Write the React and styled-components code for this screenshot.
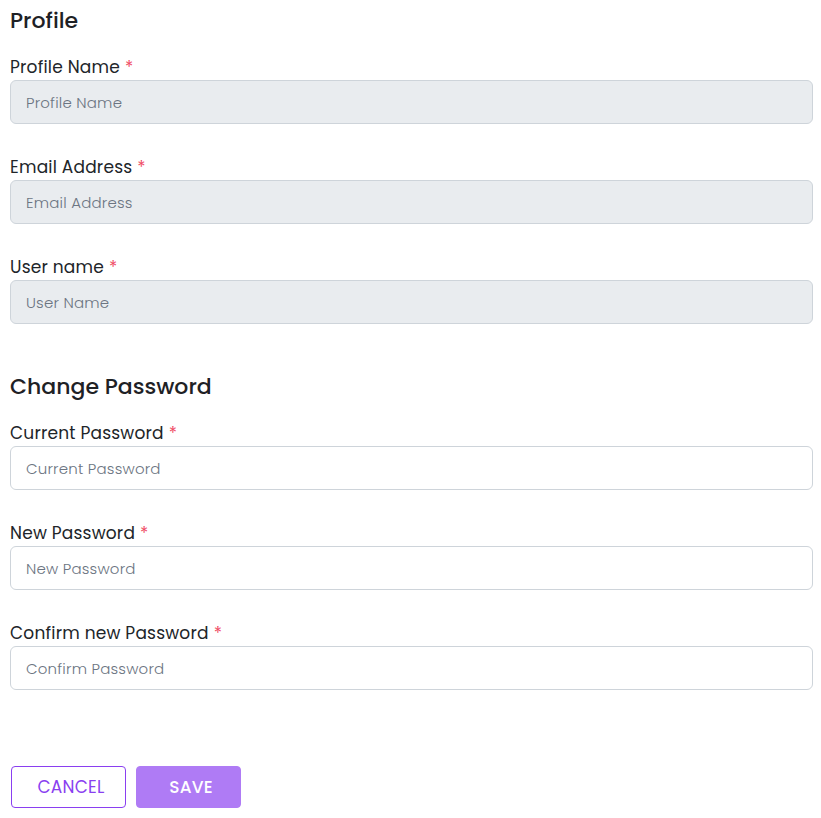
import React from "react";
import styled, { createGlobalStyle } from "styled-components";

const GlobalStyle = createGlobalStyle`
  body {
    margin: 0;
    background: #fff;
    font-family: "Poppins", "Open Sans", sans-serif;
    color: #212529;
  }
  * { box-sizing: border-box; }
`;

const Page = styled.div`
  padding: 4px 8px 10px 10px;
`;

const Section = styled.section`
  display: flex;
  flex-direction: column;
  margin-bottom: ${(p) => p.$gap || "0"};
`;

const Heading = styled.h2`
  margin: 1px 0 18px;
  font-size: 22px;
  font-weight: 500;
  line-height: 32px;
  color: #1e2125;
`;

const Field = styled.div`
  display: flex;
  flex-direction: column;
  margin-bottom: 31px;

  &:last-child {
    margin-bottom: 0;
  }
`;

const Label = styled.label`
  font-size: 17px;
  line-height: 24px;
  margin-bottom: 1px;
  letter-spacing: 0.2px;
  color: #212529;
`;

const Required = styled.span`
  color: #ef4a64;
  margin-left: 5px;
`;

const Input = styled.input`
  height: 44px;
  width: 100%;
  padding: 0 15px;
  font-family: inherit;
  font-size: 15px;
  font-weight: 300;
  letter-spacing: 0.2px;
  color: #212529;
  background: ${(p) => (p.disabled ? "#e9ecef" : "#fff")};
  border: 1px solid #ced4da;
  border-radius: 6px;
  outline: none;

  &::placeholder {
    color: #6c7582;
  }
`;

const Actions = styled.div`
  display: flex;
  gap: 10px;
  margin-top: 76px;
  padding-left: 1px;
`;

const Button = styled.button`
  height: 42px;
  padding: 0 0 0 5px;
  width: ${(p) => p.$width};
  font-family: inherit;
  font-size: 17px;
  font-weight: ${(p) => (p.$primary ? 500 : 400)};
  letter-spacing: 0.2px;
  text-transform: uppercase;
  border-radius: 4px;
  cursor: pointer;
  border: 1px solid ${(p) => (p.$primary ? "#af7bf5" : "#8a3ff0")};
  background: ${(p) => (p.$primary ? "#af7bf5" : "#fff")};
  color: ${(p) => (p.$primary ? "#fff" : "#8a3ff0")};
`;

const profileFields = [
  { label: "Profile Name", placeholder: "Profile Name" },
  { label: "Email Address", placeholder: "Email Address" },
  { label: "User name", placeholder: "User Name" },
];

const passwordFields = [
  { label: "Current Password", placeholder: "Current Password" },
  { label: "New Password", placeholder: "New Password" },
  { label: "Confirm new Password", placeholder: "Confirm Password" },
];

const App = () => {
  return (
    <>
      <GlobalStyle />
      <Page>
        <Section $gap="46px">
          <Heading>Profile</Heading>
          {profileFields.map((f) => (
            <Field key={f.label}>
              <Label>
                {f.label}
                <Required>*</Required>
              </Label>
              <Input placeholder={f.placeholder} disabled />
            </Field>
          ))}
        </Section>
        <Section>
          <Heading>Change Password</Heading>
          {passwordFields.map((f) => (
            <Field key={f.label}>
              <Label>
                {f.label}
                <Required>*</Required>
              </Label>
              <Input type="password" placeholder={f.placeholder} />
            </Field>
          ))}
        </Section>
        <Actions>
          <Button $width="115px">Cancel</Button>
          <Button $primary $width="105px">Save</Button>
        </Actions>
      </Page>
    </>
  );
};

export default App;
